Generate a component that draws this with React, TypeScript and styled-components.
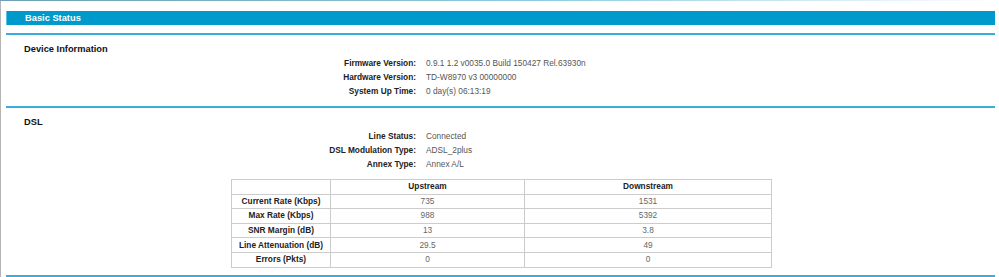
import React from 'react';
import styled, { createGlobalStyle } from 'styled-components';

// ===== グローバルスタイル =====
const GlobalStyle = createGlobalStyle`
  body {
    margin: 0;
    background: #fff;
    font-family: "Liberation Sans", Arial, sans-serif;
    font-size: 8.3px;
    color: #333;
  }
`;

// 上端のグラデーションライン
const TopLine = styled.div`
  height: 1px;
  background: linear-gradient(to right, #6e9fb2, #8fcde3 55%, #ffffff);
`;

// ページ全体（左側のフレーム線つき）
const Page = styled.div`
  border-left: 1px solid #b4b4b4;
  padding: 10px 4px 0 5px;
  min-height: 276px;
  box-sizing: border-box;
`;

// 「Basic Status」タイトルバー
const TitleBar = styled.div`
  height: 14px;
  line-height: 14px;
  background: #0099cc;
  border-left: 1px solid #5cc0e4;
  padding-left: 18px;
  color: #fff;
  font-weight: bold;
  font-size: 9.3px;
`;

// 区切り線
const Divider = styled.div<{ $top: number }>`
  margin-top: ${(p) => p.$top}px;
  height: 2px;
  background: #3aaedb;
`;

// セクション
const Section = styled.section`
  padding-top: 7px;
`;

const SectionTitle = styled.h3`
  margin: 0 0 0 18px;
  font-size: 9.3px;
  line-height: 14px;
  font-weight: bold;
  color: #111;
`;

// ラベル：値 の一覧
const InfoList = styled.div`
  display: grid;
  grid-template-columns: 410px 1fr;
  column-gap: 10px;
  line-height: 14px;
`;

const InfoLabel = styled.div`
  text-align: right;
  font-weight: bold;
  color: #222;
`;

const InfoValue = styled.div`
  color: #555;
`;

// DSL統計テーブル
const StatsTable = styled.table`
  margin: 8px 0 0 225px;
  border-collapse: collapse;
  table-layout: fixed;
  width: 540px;
  font-size: 8.3px;
`;

const Cell = styled.td<{ $head?: boolean }>`
  border: 1px solid #cccccc;
  height: 13.6px;
  padding: 0;
  text-align: center;
  line-height: 13px;
  white-space: nowrap;
  font-weight: ${(p) => (p.$head ? 'bold' : 'normal')};
  color: ${(p) => (p.$head ? '#222' : '#666')};
`;

const deviceInfo = [
  ['Firmware Version:', '0.9.1 1.2 v0035.0 Build 150427 Rel.63930n'],
  ['Hardware Version:', 'TD-W8970 v3 00000000'],
  ['System Up Time:', '0 day(s) 06:13:19'],
];

const dslInfo = [
  ['Line Status:', 'Connected'],
  ['DSL Modulation Type:', 'ADSL_2plus'],
  ['Annex Type:', 'Annex A/L'],
];

const stats = [
  ['Current Rate (Kbps)', '735', '1531'],
  ['Max Rate (Kbps)', '988', '5392'],
  ['SNR Margin (dB)', '13', '3.8'],
  ['Line Attenuation (dB)', '29.5', '49'],
  ['Errors (Pkts)', '0', '0'],
];

const Info: React.FC<{ rows: string[][] }> = ({ rows }) => (
  <InfoList>
    {rows.map(([label, value]) => (
      <React.Fragment key={label}>
        <InfoLabel>{label}</InfoLabel>
        <InfoValue>{value}</InfoValue>
      </React.Fragment>
    ))}
  </InfoList>
);

const App: React.FC = () => (
  <>
    <GlobalStyle />
    <TopLine />
    <Page>
      <TitleBar>Basic Status</TitleBar>
      <Divider $top={8} />

      <Section>
        <SectionTitle>Device Information</SectionTitle>
        <Info rows={deviceInfo} />
      </Section>
      <Divider $top={8} />

      <Section>
        <SectionTitle>DSL</SectionTitle>
        <Info rows={dslInfo} />
        <StatsTable>
          <colgroup>
            <col style={{ width: 99 }} />
            <col style={{ width: 194 }} />
            <col style={{ width: 247 }} />
          </colgroup>
          <tbody>
            <tr>
              <Cell $head />
              <Cell $head>Upstream</Cell>
              <Cell $head>Downstream</Cell>
            </tr>
            {stats.map(([label, up, down]) => (
              <tr key={label}>
                <Cell $head>{label}</Cell>
                <Cell>{up}</Cell>
                <Cell>{down}</Cell>
              </tr>
            ))}
          </tbody>
        </StatsTable>
      </Section>
      <Divider $top={7} />
    </Page>
  </>
);

export default App;
